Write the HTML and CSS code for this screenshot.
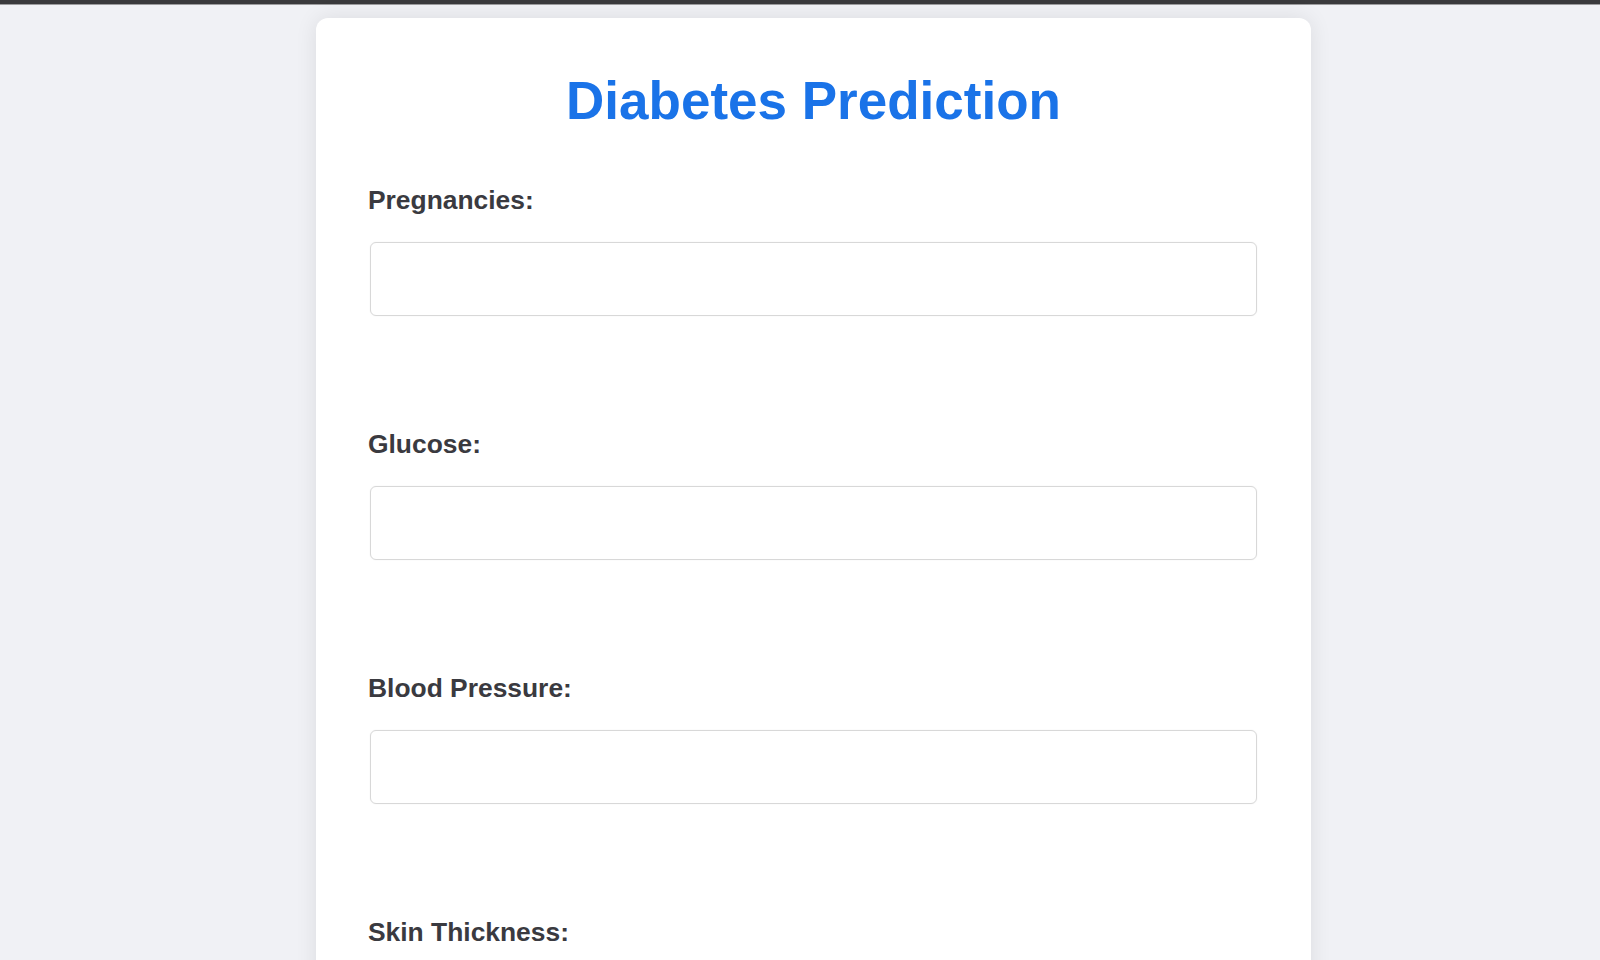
FILE: index.html
```html
<!DOCTYPE html>
<html lang="en">
<head>
<meta charset="utf-8">
<title>Diabetes Prediction</title>
<link rel="stylesheet" href="styles.css">
</head>
<body>
<div class="topbar"></div>
<main class="page">
  <form class="card">
    <h2 class="title">Diabetes Prediction</h2>
    <div class="field">
      <label class="label" for="preg">Pregnancies:</label>
      <input class="input" id="preg" type="text">
    </div>
    <div class="field">
      <label class="label" for="glu">Glucose:</label>
      <input class="input" id="glu" type="text">
    </div>
    <div class="field">
      <label class="label" for="bp">Blood Pressure:</label>
      <input class="input" id="bp" type="text">
    </div>
    <div class="field">
      <label class="label" for="skin">Skin Thickness:</label>
      <input class="input" id="skin" type="text">
    </div>
    <div class="field">
      <label class="label" for="ins">Insulin:</label>
      <input class="input" id="ins" type="text">
    </div>
    <div class="field">
      <label class="label" for="bmi">BMI:</label>
      <input class="input" id="bmi" type="text">
    </div>
  </form>
</main>
</body>
</html>
```

FILE: styles.css
```css
html, body {
  margin: 0;
  padding: 0;
}
body {
  background: #f0f1f5;
  font-family: "Liberation Sans", Arial, sans-serif;
  font-size: 26.4px;
  color: #333;
}
.topbar {
  height: 4px;
  background: #3a3a3c;
  border-bottom: 1px solid #9c9c9e;
}
.page {
  padding: 13px 289px 0 316px;
}
.card {
  background: #ffffff;
  border-radius: 12px;
  box-shadow: 0 0 22px rgba(0, 0, 0, 0.09);
  padding: 52px 54px 60px 54px;
}
.title {
  margin: 0 0 54px 0;
  text-align: center;
  color: #1a73e8;
  font-size: 53px;
  font-weight: bold;
  line-height: 61px;
}
.field {
  display: flex;
  flex-direction: column;
  margin-bottom: 113px;
}
.label {
  display: block;
  font-weight: bold;
  line-height: 30px;
  color: #3a3a40;
  margin: 0 0 27px -2px;
}
.input {
  display: block;
  box-sizing: border-box;
  width: 100%;
  height: 74px;
  border: 1.5px solid #d8d8d8;
  border-radius: 6px;
  background: #fff;
  box-shadow: 0 0 2px rgba(0, 0, 0, 0.06);
  font-family: inherit;
  font-size: 26px;
  padding: 0 16px;
}
```
